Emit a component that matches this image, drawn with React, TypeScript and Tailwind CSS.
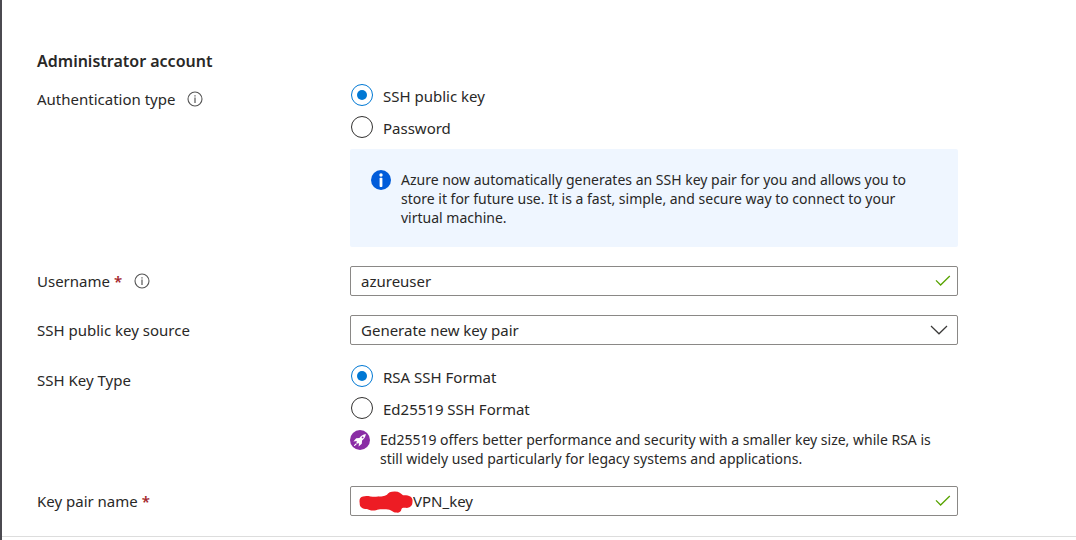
import { useState, type ReactNode } from "react";

function InfoOutline({ label }: { label: string }) {
  return (
    <button type="button" aria-label={label} className="shrink-0 text-[#555]">
      <svg width="16" height="16" viewBox="0 0 16 16" fill="none" stroke="currentColor" className="block">
        <circle cx="8" cy="8" r="7" strokeWidth="1.1" />
        <path d="M8 6.6V12" strokeWidth="1.2" />
        <path d="M8 4.2V5.4" strokeWidth="1.2" />
      </svg>
    </button>
  );
}

function InfoSolid() {
  return (
    <svg width="20" height="20" viewBox="0 0 20 20" className="block shrink-0" aria-hidden="true">
      <circle cx="10" cy="10" r="10" fill="#015cda" />
      <circle cx="10" cy="5" r="1.7" fill="#fff" />
      <rect x="8.6" y="7.8" width="2.8" height="9.2" rx="0.8" fill="#fff" />
    </svg>
  );
}

function Rocket() {
  return (
    <svg width="20" height="20" viewBox="0 0 20 20" className="block shrink-0" aria-hidden="true">
      <circle cx="10" cy="10" r="10" fill="#8a2da5" />
      <path
        fill="#fff"
        d="M15.8 4C13.2 4.4 11.4 5.4 9.4 7.9L6.2 8.3 3.4 11.6 6.9 11 6.3 12.4 7.6 13.8 9.1 13.1 8.6 16.6 11.8 13.7 12.1 10.6C14.6 8.6 15.6 6.6 15.8 4Z"
      />
      <path d="M6.2 13.8L4.6 15.4" stroke="#fff" strokeWidth="1.2" strokeLinecap="round" />
      <circle cx="12.6" cy="7.4" r="0.9" fill="#8a2da5" />
    </svg>
  );
}

function Check() {
  return (
    <svg width="16" height="12" viewBox="0 0 16 12" className="block shrink-0" fill="none" aria-hidden="true">
      <path d="M1 5.4L5.6 10L14.8 1" stroke="#57a300" strokeWidth="1.3" />
    </svg>
  );
}

function Label({ text, htmlFor, required }: { text: string; htmlFor?: string; required?: boolean }) {
  const content = (
    <>
      {text}
      {required && <span className="font-semibold text-[#a4262c]"> *</span>}
    </>
  );
  return htmlFor ? <label htmlFor={htmlFor}>{content}</label> : <span>{content}</span>;
}

function Row({ label, children }: { label: ReactNode; children: ReactNode }) {
  return (
    <div className="grid grid-cols-[minmax(160px,313px)_minmax(0,608px)]">
      <div className="flex h-[30px] items-center gap-3">{label}</div>
      <div>{children}</div>
    </div>
  );
}

function Radios({ name, options, legend }: { name: string; options: string[]; legend: string }) {
  const [value, setValue] = useState(options[0]);
  return (
    <div role="radiogroup" aria-label={legend} className="ml-px flex flex-col">
      {options.map((option) => (
        <label key={option} className="flex h-8 items-start gap-[10px]">
          <input
            type="radio"
            name={name}
            checked={value === option}
            onChange={() => setValue(option)}
            className="grid size-[22px] shrink-0 appearance-none place-items-center rounded-full border border-[#323130] bg-white before:size-[10px] before:rounded-full checked:border-[#0078d4] checked:before:bg-[#0078d4]"
          />
          <span className="leading-6">{option}</span>
        </label>
      ))}
    </div>
  );
}

const boxClass = "flex h-[30px] items-center rounded-[2px] border border-[#8a8886] bg-white";

export default function App() {
  return (
    <main className="min-h-screen border-l-2 border-[#4b4a50] bg-white font-['Noto_Sans','Open_Sans',sans-serif] text-[15px] text-[#292827]">
      <form className="border-b border-[#dddddd] pt-[49px] pb-5 pl-[35px]">
        <h2 className="text-base leading-6 font-semibold">Administrator account</h2>
        <div className="pt-[11px]">
          <Row
            label={
              <>
                <Label text="Authentication type" />
                <InfoOutline label="About authentication type" />
              </>
            }
          >
            <Radios name="auth" legend="Authentication type" options={["SSH public key", "Password"]} />
            <div className="mt-px flex gap-[10px] rounded-[2px] bg-[#eff6ff] px-[21px] pt-[21px] pb-5">
              <InfoSolid />
              <p className="max-w-[530px] text-sm leading-[19px]">
                Azure now automatically generates an SSH key pair for you and allows you to store it for future use. It
                is a fast, simple, and secure way to connect to your virtual machine.
              </p>
            </div>
          </Row>
        </div>
        <div className="flex flex-col pt-[19px]">
          <Row
            label={
              <>
                <Label text="Username" htmlFor="username" required />
                <InfoOutline label="About username" />
              </>
            }
          >
            <div className={`${boxClass} pr-1.5 pl-[10px]`}>
              <input id="username" defaultValue="azureuser" className="min-w-0 flex-1 leading-5 outline-none" />
              <Check />
            </div>
          </Row>
          <div className="pt-[19px]">
            <Row label={<Label text="SSH public key source" htmlFor="source" />}>
              <div className={`${boxClass} grid grid-cols-1 grid-rows-1`}>
                <select
                  id="source"
                  className="col-start-1 row-start-1 h-full w-full appearance-none bg-transparent pr-9 pl-[10px] outline-none"
                >
                  <option>Generate new key pair</option>
                </select>
                <svg
                  width="18"
                  height="10"
                  viewBox="0 0 18 10"
                  fill="none"
                  aria-hidden="true"
                  className="pointer-events-none col-start-1 row-start-1 mr-[9px] justify-self-end"
                >
                  <path d="M1 1L9 8.8L17 1" stroke="#3b3a39" strokeWidth="1.2" />
                </svg>
              </div>
            </Row>
          </div>
          <div className="pt-5">
            <Row label={<Label text="SSH Key Type" />}>
              <Radios name="keytype" legend="SSH Key Type" options={["RSA SSH Format", "Ed25519 SSH Format"]} />
              <div className="flex gap-[10px] pt-px">
                <Rocket />
                <p className="max-w-[560px] text-sm leading-[19px]">
                  Ed25519 offers better performance and security with a smaller key size, while RSA is still widely used
                  particularly for legacy systems and applications.
                </p>
              </div>
            </Row>
          </div>
          <div className="pt-[18px]">
            <Row label={<Label text="Key pair name" htmlFor="keyname" required />}>
              <div className={`${boxClass} pr-1.5 pl-2`}>
                <svg width="54" height="22" viewBox="0 0 54 22" className="mt-0.5 block shrink-0" aria-hidden="true">
                  <path
                    fill="#ed1c24"
                    d="M4 5.5C8 4 12 6 17 5.7C23 5.5 25 5.5 28 3.8C29 1.5 32 .3 36 .4C40 .4 42 2.5 44 4.2C50 3.8 54 6 53.5 10C53.8 14 52 16.5 48 17C44 16.4 43 17 42.5 18C42 21 40 22 37 21.6C34 21.6 33 19.2 29 18.5C23 18.4 20 18 17 19.2C13 20.3 10 19 8 18C3 17.8 .5 16 .7 12C0 8.5 1 6 4 5.5Z"
                  />
                </svg>
                <input id="keyname" defaultValue="VPN_key" className="min-w-0 flex-1 leading-5 outline-none" />
                <Check />
              </div>
            </Row>
          </div>
        </div>
      </form>
    </main>
  );
}
